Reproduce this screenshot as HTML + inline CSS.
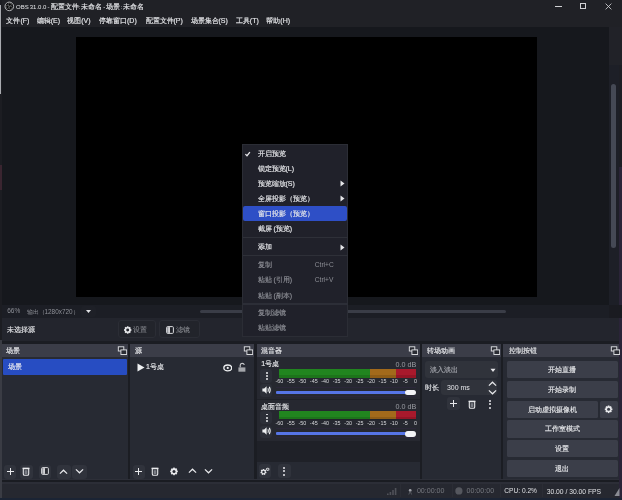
<!DOCTYPE html>
<html><head><meta charset="utf-8">
<style>
*{box-sizing:border-box;margin:0;padding:0}
html,body{width:622px;height:500px;overflow:hidden;background:#1b1d23}
body{position:relative;font-family:"Liberation Sans",sans-serif;font-size:7px;color:#e6e7ea}
.a{position:absolute;display:block}
.t{position:absolute;white-space:nowrap;font-weight:normal}
.t i{font-style:normal;font-size:7px;-webkit-text-stroke:0.15px currentColor}
</style></head><body>
<div id="root" style="position:absolute;left:0;top:0;width:622px;height:500px;will-change:transform">
<div class="a" style="left:0px;top:0px;width:622px;height:500px;background:#1b1d23;"></div>
<div class="a" style="left:0px;top:0px;width:2px;height:500px;background:#1c1d22;"></div>
<div class="a" style="left:0px;top:5px;width:1.3px;height:89px;background:#a9abb0;"></div>
<div class="a" style="left:0px;top:165px;width:1.5px;height:25px;background:#3a2530;"></div>
<div class="a" style="left:0px;top:340px;width:2px;height:160px;background:#3a3c44;"></div>
<div class="a" style="left:2px;top:0px;width:620px;height:27px;background:#202126;"></div>
<div class="a" style="left:619px;top:65px;width:3px;height:102px;background:#1d1e24;"></div>
<div class="a" style="left:619px;top:167px;width:3px;height:333px;background:#2a2438;"></div>
<svg class="a" style="left:4px;top:1px;" width="11" height="11" viewBox="0 0 11 11"><circle cx="5.3" cy="5.4" r="4.3" fill="#0a0a0c" stroke="#cfd0d3" stroke-width="0.85"/><circle cx="5.79" cy="3.56" r="1.55" fill="#050506" stroke="#9fa0a4" stroke-width="0.45"/><circle cx="6.64" cy="6.74" r="1.55" fill="#050506" stroke="#9fa0a4" stroke-width="0.45"/><circle cx="3.46" cy="5.89" r="1.55" fill="#050506" stroke="#9fa0a4" stroke-width="0.45"/></svg>
<div class="t" style="left:16px;top:-1.63px;font-size:6.0px;line-height:17.14px;color:#e4e5e8;word-spacing:-0.6px;">OBS 31.0.0 - <i>配置文件</i>: <i>未命名</i> - <i>场景</i>: <i>未命名</i></div>
<div class="a" style="left:554.5px;top:6px;width:7px;height:1px;background:#d0d1d4;"></div>
<div class="a" style="left:580px;top:3px;width:6px;height:6px;background:transparent;border:1px solid #d0d1d4"></div>
<svg class="a" style="left:605px;top:3px;" width="7" height="7" viewBox="0 0 7 7"><path d="M0.6 0.6L6.4 6.4M6.4 0.6L0.6 6.4" stroke="#d0d1d4" stroke-width="0.85"/></svg>
<div class="t" style="left:6.4px;top:11.40px;font-size:7px;line-height:20.00px;color:#e6e7ea;-webkit-text-stroke:0.15px currentColor;">文件(F)</div>
<div class="t" style="left:36.7px;top:11.40px;font-size:7px;line-height:20.00px;color:#e6e7ea;-webkit-text-stroke:0.15px currentColor;">编辑(E)</div>
<div class="t" style="left:67.2px;top:11.40px;font-size:7px;line-height:20.00px;color:#e6e7ea;-webkit-text-stroke:0.15px currentColor;">视图(V)</div>
<div class="t" style="left:99px;top:11.40px;font-size:7px;line-height:20.00px;color:#e6e7ea;-webkit-text-stroke:0.15px currentColor;">停靠窗口(D)</div>
<div class="t" style="left:145.5px;top:11.40px;font-size:7px;line-height:20.00px;color:#e6e7ea;-webkit-text-stroke:0.15px currentColor;">配置文件(P)</div>
<div class="t" style="left:190.5px;top:11.40px;font-size:7px;line-height:20.00px;color:#e6e7ea;-webkit-text-stroke:0.15px currentColor;">场景集合(S)</div>
<div class="t" style="left:235.8px;top:11.40px;font-size:7px;line-height:20.00px;color:#e6e7ea;-webkit-text-stroke:0.15px currentColor;">工具(T)</div>
<div class="t" style="left:266.3px;top:11.40px;font-size:7px;line-height:20.00px;color:#e6e7ea;-webkit-text-stroke:0.15px currentColor;">帮助(H)</div>
<div class="a" style="left:2px;top:27px;width:607px;height:278px;background:#16181d;"></div>
<div class="a" style="left:76px;top:37px;width:461px;height:260px;background:#000000;"></div>
<div class="a" style="left:609px;top:27px;width:13px;height:38px;background:#212228;"></div>
<div class="a" style="left:609px;top:65px;width:10px;height:240px;background:#1d1f27;"></div>
<div class="a" style="left:610.8px;top:83.5px;width:5.6px;height:164.5px;background:#454955;border-radius:2.5px"></div>
<div class="a" style="left:2px;top:305px;width:617px;height:12.5px;background:#1c1e25;"></div>
<div class="a" style="left:609px;top:305px;width:13px;height:12.5px;background:#1a1b21;"></div>
<div class="t" style="left:7.2px;top:302.39px;font-size:6.5px;line-height:18.57px;color:#8e9097;">66%</div>
<div class="t" style="left:26.5px;top:302.52px;font-size:6.4px;line-height:18.29px;color:#8e9097;">输出（1280x720）</div>
<div class="a" style="left:80.5px;top:305.5px;width:15px;height:11.5px;background:#1e2027;border-radius:3px"></div>
<svg class="a" style="left:85px;top:309px;" width="7" height="5" viewBox="0 0 7 5"><path d="M1 1L6 1L3.5 4Z" fill="#e0e1e4"/></svg>
<div class="a" style="left:199.8px;top:309.6px;width:305.8px;height:3.8px;background:#3a3d47;border-radius:2px"></div>
<div class="a" style="left:2px;top:317.5px;width:617px;height:23.3px;background:#23252d;"></div>
<div class="t" style="left:7px;top:320.00px;font-size:7px;line-height:20.00px;color:#e0e1e4;-webkit-text-stroke:0.15px currentColor;">未选择源</div>
<div class="a" style="left:118.4px;top:320.1px;width:37.4px;height:18.3px;background:#22242b;border:1px solid #2b2d35;border-radius:3px"></div>
<div class="a" style="left:158.9px;top:320.1px;width:41.1px;height:18.3px;background:#22242b;border:1px solid #2b2d35;border-radius:3px"></div>
<div class="t" style="left:133.4px;top:320.40px;font-size:7px;line-height:20.00px;color:#9a9ca2;">设置</div>
<svg class="a" style="left:0;top:0" width="622" height="500"><circle cx="127.7" cy="330" r="2.96" fill="#e8e9ec"/><rect x="126.89" y="326.30" width="1.63" height="1.85" fill="#e8e9ec" transform="rotate(0.0 127.7 330)"/><rect x="126.89" y="326.30" width="1.63" height="1.85" fill="#e8e9ec" transform="rotate(45.0 127.7 330)"/><rect x="126.89" y="326.30" width="1.63" height="1.85" fill="#e8e9ec" transform="rotate(90.0 127.7 330)"/><rect x="126.89" y="326.30" width="1.63" height="1.85" fill="#e8e9ec" transform="rotate(135.0 127.7 330)"/><rect x="126.89" y="326.30" width="1.63" height="1.85" fill="#e8e9ec" transform="rotate(180.0 127.7 330)"/><rect x="126.89" y="326.30" width="1.63" height="1.85" fill="#e8e9ec" transform="rotate(225.0 127.7 330)"/><rect x="126.89" y="326.30" width="1.63" height="1.85" fill="#e8e9ec" transform="rotate(270.0 127.7 330)"/><rect x="126.89" y="326.30" width="1.63" height="1.85" fill="#e8e9ec" transform="rotate(315.0 127.7 330)"/><circle cx="127.7" cy="330" r="1.48" fill="#22242b"/></svg>
<div class="t" style="left:175.8px;top:320.40px;font-size:7px;line-height:20.00px;color:#9a9ca2;">滤镜</div>
<svg class="a" style="left:165.8px;top:326px;" width="8" height="8" viewBox="0 0 8 8"><defs><linearGradient id="fg2" x1="0" x2="1"><stop offset="0" stop-color="#9a9ca2"/><stop offset="1" stop-color="#f0f0f2"/></linearGradient></defs><rect x="0.6" y="0.6" width="6.8" height="6.8" rx="1" fill="#22242b" stroke="#d8d9dc" stroke-width="1"/><rect x="1.1" y="1.1" width="2.8" height="5.8" fill="url(#fg2)"/></svg>
<div class="a" style="left:2px;top:343.5px;width:126px;height:13.8px;background:#3b3d48;"></div>
<div class="a" style="left:2px;top:357.3px;width:126px;height:122.7px;background:#272a33;"></div>
<div class="t" style="left:6.3px;top:341.10px;font-size:7px;line-height:20.00px;color:#e6e7ea;-webkit-text-stroke:0.15px currentColor;">场景</div>
<div class="a" style="left:130px;top:343.5px;width:124px;height:13.8px;background:#3b3d48;"></div>
<div class="a" style="left:130px;top:357.3px;width:124px;height:122.7px;background:#272a33;"></div>
<div class="t" style="left:134.5px;top:341.10px;font-size:7px;line-height:20.00px;color:#e6e7ea;-webkit-text-stroke:0.15px currentColor;">源</div>
<div class="a" style="left:257px;top:343.5px;width:163px;height:13.8px;background:#3b3d48;"></div>
<div class="a" style="left:257px;top:357.3px;width:163px;height:122.7px;background:#272a33;"></div>
<div class="t" style="left:260.8px;top:341.10px;font-size:7px;line-height:20.00px;color:#e6e7ea;-webkit-text-stroke:0.15px currentColor;">混音器</div>
<div class="a" style="left:422px;top:343.5px;width:79px;height:13.8px;background:#3b3d48;"></div>
<div class="a" style="left:422px;top:357.3px;width:79px;height:122.7px;background:#272a33;"></div>
<div class="t" style="left:427.2px;top:341.10px;font-size:7px;line-height:20.00px;color:#e6e7ea;-webkit-text-stroke:0.15px currentColor;">转场动画</div>
<div class="a" style="left:503px;top:343.5px;width:116px;height:13.8px;background:#3b3d48;"></div>
<div class="a" style="left:503px;top:357.3px;width:116px;height:122.7px;background:#272a33;"></div>
<div class="t" style="left:508.5px;top:341.10px;font-size:7px;line-height:20.00px;color:#e6e7ea;-webkit-text-stroke:0.15px currentColor;">控制按钮</div>
<div class="a" style="left:2.8px;top:358.9px;width:124px;height:16.3px;background:#274dc2;border-radius:1px"></div>
<div class="t" style="left:7.5px;top:356.90px;font-size:7px;line-height:20.00px;color:#e6e8f0;-webkit-text-stroke:0.15px currentColor;">场景</div>
<svg class="a" style="left:116.5px;top:346.4px;" width="10" height="9" viewBox="0 0 10 9"><rect x="1.3" y="0.8" width="5.5" height="4.2" fill="#2a2c33" stroke="#e6e7ea" stroke-width="0.9"/><rect x="3.9" y="3.9" width="5.8" height="4.6" fill="#2a2c33" stroke="#e6e7ea" stroke-width="0.9"/></svg>
<svg class="a" style="left:242.5px;top:346.4px;" width="10" height="9" viewBox="0 0 10 9"><rect x="1.3" y="0.8" width="5.5" height="4.2" fill="#2a2c33" stroke="#e6e7ea" stroke-width="0.9"/><rect x="3.9" y="3.9" width="5.8" height="4.6" fill="#2a2c33" stroke="#e6e7ea" stroke-width="0.9"/></svg>
<svg class="a" style="left:408px;top:346.4px;" width="10" height="9" viewBox="0 0 10 9"><rect x="1.3" y="0.8" width="5.5" height="4.2" fill="#2a2c33" stroke="#e6e7ea" stroke-width="0.9"/><rect x="3.9" y="3.9" width="5.8" height="4.6" fill="#2a2c33" stroke="#e6e7ea" stroke-width="0.9"/></svg>
<svg class="a" style="left:489.5px;top:346.4px;" width="10" height="9" viewBox="0 0 10 9"><rect x="1.3" y="0.8" width="5.5" height="4.2" fill="#2a2c33" stroke="#e6e7ea" stroke-width="0.9"/><rect x="3.9" y="3.9" width="5.8" height="4.6" fill="#2a2c33" stroke="#e6e7ea" stroke-width="0.9"/></svg>
<svg class="a" style="left:609.5px;top:346.4px;" width="10" height="9" viewBox="0 0 10 9"><rect x="1.3" y="0.8" width="5.5" height="4.2" fill="#2a2c33" stroke="#e6e7ea" stroke-width="0.9"/><rect x="3.9" y="3.9" width="5.8" height="4.6" fill="#2a2c33" stroke="#e6e7ea" stroke-width="0.9"/></svg>
<div class="a" style="left:3.6px;top:464.5px;width:12.3px;height:14px;background:#30333c;border-radius:3px"></div>
<div class="a" style="left:20.3px;top:464.5px;width:12.3px;height:14px;background:#30333c;border-radius:3px"></div>
<div class="a" style="left:39px;top:464.5px;width:12.399999999999999px;height:14px;background:#30333c;border-radius:3px"></div>
<div class="a" style="left:57.2px;top:464.5px;width:13.700000000000003px;height:14px;background:#30333c;border-radius:3px"></div>
<div class="a" style="left:72.4px;top:464.5px;width:14.399999999999991px;height:14px;background:#30333c;border-radius:3px"></div>
<div class="a" style="left:7.0px;top:470.9px;width:7px;height:1.1px;background:#e8e9ec;"></div>
<div class="a" style="left:9.95px;top:467.9px;width:1.1px;height:7px;background:#e8e9ec;"></div>
<svg class="a" style="left:22.1px;top:466.9px;" width="8" height="9" viewBox="0 0 8 9"><path d="M1.3 1.6H6.7V7Q6.7 8.3 5.4 8.3H2.6Q1.3 8.3 1.3 7Z" fill="none" stroke="#e8e9ec" stroke-width="1.1"/><path d="M0.6 1.3H7.4" stroke="#e8e9ec" stroke-width="1.3"/><rect x="2.6" y="3.2" width="2.8" height="3.8" fill="#7a7d85"/></svg>
<svg class="a" style="left:40.7px;top:466.6px;" width="8" height="8" viewBox="0 0 8 8"><defs><linearGradient id="fg" x1="0" x2="1"><stop offset="0" stop-color="#9a9ca2"/><stop offset="1" stop-color="#f0f0f2"/></linearGradient></defs><rect x="0.6" y="0.6" width="6.8" height="6.8" rx="1" fill="#2a2c33" stroke="#d8d9dc" stroke-width="1"/><rect x="1.1" y="1.1" width="2.8" height="5.8" fill="url(#fg)"/></svg>
<svg class="a" style="left:59.1px;top:468.6px;" width="9" height="6" viewBox="0 0 9 6"><path d="M0.9 4.6L4.5 1.2L8.1 4.6" fill="none" stroke="#e8e9ec" stroke-width="1.2"/></svg>
<svg class="a" style="left:75.2px;top:468.4px;" width="9" height="6" viewBox="0 0 9 6"><path d="M0.9 1.4L4.5 4.8L8.1 1.4" fill="none" stroke="#e8e9ec" stroke-width="1.2"/></svg>
<svg class="a" style="left:136.5px;top:362.5px;" width="8" height="9" viewBox="0 0 8 9"><path d="M0.5 0.5L7.5 4.5L0.5 8.5Z" fill="#eef0f2"/></svg>
<div class="t" style="left:146px;top:357.40px;font-size:7px;line-height:20.00px;color:#e6e7ea;-webkit-text-stroke:0.15px currentColor;">1号桌</div>
<svg class="a" style="left:222.5px;top:363.6px;" width="9.5" height="8" viewBox="0 0 9.5 8"><ellipse cx="4.75" cy="3.9" rx="3.9" ry="2.9" fill="none" stroke="#eef0f2" stroke-width="1.35"/><circle cx="4.75" cy="3.9" r="1.1" fill="#eef0f2"/></svg>
<svg class="a" style="left:237.5px;top:362.3px;" width="8" height="10" viewBox="0 0 8 10"><path d="M2.2 5.5V3A2.1 2.1 0 0 1 6.3 3" fill="none" stroke="#c8c9cc" stroke-width="1.1"/><rect x="0.4" y="5.4" width="7" height="4.3" fill="#a3a5aa"/></svg>
<div class="a" style="left:132.6px;top:464.5px;width:12.5px;height:14px;background:#30333c;border-radius:3px"></div>
<div class="a" style="left:135.3px;top:470.9px;width:7px;height:1.1px;background:#e8e9ec;"></div>
<div class="a" style="left:138.25px;top:467.9px;width:1.1px;height:7px;background:#e8e9ec;"></div>
<svg class="a" style="left:151px;top:466.9px;" width="8" height="9" viewBox="0 0 8 9"><path d="M1.3 1.6H6.7V7Q6.7 8.3 5.4 8.3H2.6Q1.3 8.3 1.3 7Z" fill="none" stroke="#e8e9ec" stroke-width="1.1"/><path d="M0.6 1.3H7.4" stroke="#e8e9ec" stroke-width="1.3"/><rect x="2.6" y="3.2" width="2.8" height="3.8" fill="#7a7d85"/></svg>
<svg class="a" style="left:0;top:0" width="622" height="500"><circle cx="174" cy="471.4" r="3.04" fill="#e8e9ec"/><rect x="173.16" y="467.60" width="1.67" height="1.90" fill="#e8e9ec" transform="rotate(0.0 174 471.4)"/><rect x="173.16" y="467.60" width="1.67" height="1.90" fill="#e8e9ec" transform="rotate(45.0 174 471.4)"/><rect x="173.16" y="467.60" width="1.67" height="1.90" fill="#e8e9ec" transform="rotate(90.0 174 471.4)"/><rect x="173.16" y="467.60" width="1.67" height="1.90" fill="#e8e9ec" transform="rotate(135.0 174 471.4)"/><rect x="173.16" y="467.60" width="1.67" height="1.90" fill="#e8e9ec" transform="rotate(180.0 174 471.4)"/><rect x="173.16" y="467.60" width="1.67" height="1.90" fill="#e8e9ec" transform="rotate(225.0 174 471.4)"/><rect x="173.16" y="467.60" width="1.67" height="1.90" fill="#e8e9ec" transform="rotate(270.0 174 471.4)"/><rect x="173.16" y="467.60" width="1.67" height="1.90" fill="#e8e9ec" transform="rotate(315.0 174 471.4)"/><circle cx="174" cy="471.4" r="1.52" fill="#272a33"/></svg>
<svg class="a" style="left:188.3px;top:468.4px;" width="9" height="6" viewBox="0 0 9 6"><path d="M0.9 4.6L4.5 1.2L8.1 4.6" fill="none" stroke="#e8e9ec" stroke-width="1.2"/></svg>
<svg class="a" style="left:204.0px;top:468.4px;" width="9" height="6" viewBox="0 0 9 6"><path d="M0.9 1.4L4.5 4.8L8.1 1.4" fill="none" stroke="#e8e9ec" stroke-width="1.2"/></svg>
<div class="a" style="left:257px;top:357.4px;width:163px;height:83.6px;background:#262830;"></div>
<div class="a" style="left:257px;top:441px;width:163px;height:21px;background:#1f2128;"></div>
<div class="a" style="left:257px;top:398.6px;width:163px;height:1px;background:#1f2128;"></div>
<div class="t" style="left:261.2px;top:354.20px;font-size:7px;line-height:20.00px;color:#e6e7ea;-webkit-text-stroke:0.15px currentColor;">1号桌</div>
<div class="t" style="left:376.30px;width:40px;text-align:right;top:354.53px;font-size:7.2px;line-height:20.57px;color:#9a9ca3;">0.0 dB</div>
<div class="a" style="left:259.6px;top:368.9px;width:12.2px;height:13.8px;background:#2c2f38;border-radius:3px"></div>
<div class="a" style="left:265.95px;top:371.8px;width:1.9px;height:1.9px;background:#e8e9ec;border-radius:50%"></div>
<div class="a" style="left:265.95px;top:375.05px;width:1.9px;height:1.9px;background:#e8e9ec;border-radius:50%"></div>
<div class="a" style="left:265.95px;top:378.3px;width:1.9px;height:1.9px;background:#e8e9ec;border-radius:50%"></div>
<div class="a" style="left:259.6px;top:384.4px;width:12.2px;height:12.6px;background:#2c2f38;border-radius:3px"></div>
<svg class="a" style="left:262.3px;top:386.2px;" width="9.5" height="8" viewBox="0 0 9.5 8"><path d="M0.4 2.4H2.2L4.6 0.3V7.7L2.2 5.6H0.4Z" fill="#eef0f2"/><path d="M5.9 2.2Q6.9 4 5.9 5.8M7.3 0.9Q9.1 4 7.3 7.1" fill="none" stroke="#eef0f2" stroke-width="1.1"/></svg>
<div class="a" style="left:278.8px;top:369.4px;width:91.2px;height:8.3px;background:#21851f;"></div>
<div class="a" style="left:370px;top:369.4px;width:26.2px;height:8.3px;background:#a36a1b;"></div>
<div class="a" style="left:396.2px;top:369.4px;width:19.8px;height:8.3px;background:#a8192c;"></div>
<div class="a" style="left:278.8px;top:374.7px;width:137.2px;height:3px;background:rgba(0,0,0,0.12);"></div>
<div class="t" style="left:272.40px;width:14px;text-align:center;top:374.29px;font-size:5.4px;line-height:15.43px;color:#d8d9dc;">-60</div>
<div class="t" style="left:283.86px;width:14px;text-align:center;top:374.29px;font-size:5.4px;line-height:15.43px;color:#d8d9dc;">-55</div>
<div class="t" style="left:295.32px;width:14px;text-align:center;top:374.29px;font-size:5.4px;line-height:15.43px;color:#d8d9dc;">-50</div>
<div class="t" style="left:306.77px;width:14px;text-align:center;top:374.29px;font-size:5.4px;line-height:15.43px;color:#d8d9dc;">-45</div>
<div class="t" style="left:318.23px;width:14px;text-align:center;top:374.29px;font-size:5.4px;line-height:15.43px;color:#d8d9dc;">-40</div>
<div class="t" style="left:329.69px;width:14px;text-align:center;top:374.29px;font-size:5.4px;line-height:15.43px;color:#d8d9dc;">-35</div>
<div class="t" style="left:341.15px;width:14px;text-align:center;top:374.29px;font-size:5.4px;line-height:15.43px;color:#d8d9dc;">-30</div>
<div class="t" style="left:352.61px;width:14px;text-align:center;top:374.29px;font-size:5.4px;line-height:15.43px;color:#d8d9dc;">-25</div>
<div class="t" style="left:364.07px;width:14px;text-align:center;top:374.29px;font-size:5.4px;line-height:15.43px;color:#d8d9dc;">-20</div>
<div class="t" style="left:375.52px;width:14px;text-align:center;top:374.29px;font-size:5.4px;line-height:15.43px;color:#d8d9dc;">-15</div>
<div class="t" style="left:386.98px;width:14px;text-align:center;top:374.29px;font-size:5.4px;line-height:15.43px;color:#d8d9dc;">-10</div>
<div class="t" style="left:398.44px;width:14px;text-align:center;top:374.29px;font-size:5.4px;line-height:15.43px;color:#d8d9dc;">-5</div>
<div class="t" style="left:408.40px;width:14px;text-align:center;top:374.29px;font-size:5.4px;line-height:15.43px;color:#d8d9dc;">0</div>
<div class="a" style="left:276.2px;top:387.0px;width:140px;height:1px;background:#2b2739;"></div>
<div class="a" style="left:276.2px;top:391.2px;width:130px;height:2.4px;background:#5675e6;border-radius:1px"></div>
<div class="a" style="left:276.2px;top:395.79999999999995px;width:140px;height:1px;background:#2b2739;"></div>
<div class="a" style="left:404.8px;top:389.59999999999997px;width:11px;height:5.8px;background:#f2f3f5;border-radius:2.9px"></div>
<div class="t" style="left:261.2px;top:396.60px;font-size:7px;line-height:20.00px;color:#e6e7ea;-webkit-text-stroke:0.15px currentColor;">桌面音频</div>
<div class="t" style="left:376.30px;width:40px;text-align:right;top:396.93px;font-size:7.2px;line-height:20.57px;color:#9a9ca3;">0.0 dB</div>
<div class="a" style="left:259.6px;top:410.7px;width:12.2px;height:13.8px;background:#2c2f38;border-radius:3px"></div>
<div class="a" style="left:265.95px;top:413.6px;width:1.9px;height:1.9px;background:#e8e9ec;border-radius:50%"></div>
<div class="a" style="left:265.95px;top:416.85px;width:1.9px;height:1.9px;background:#e8e9ec;border-radius:50%"></div>
<div class="a" style="left:265.95px;top:420.1px;width:1.9px;height:1.9px;background:#e8e9ec;border-radius:50%"></div>
<div class="a" style="left:259.6px;top:425.6px;width:12.2px;height:12.6px;background:#2c2f38;border-radius:3px"></div>
<svg class="a" style="left:262.3px;top:427.40000000000003px;" width="9.5" height="8" viewBox="0 0 9.5 8"><path d="M0.4 2.4H2.2L4.6 0.3V7.7L2.2 5.6H0.4Z" fill="#eef0f2"/><path d="M5.9 2.2Q6.9 4 5.9 5.8M7.3 0.9Q9.1 4 7.3 7.1" fill="none" stroke="#eef0f2" stroke-width="1.1"/></svg>
<div class="a" style="left:278.8px;top:411.2px;width:91.2px;height:8.3px;background:#21851f;"></div>
<div class="a" style="left:370px;top:411.2px;width:26.2px;height:8.3px;background:#a36a1b;"></div>
<div class="a" style="left:396.2px;top:411.2px;width:19.8px;height:8.3px;background:#a8192c;"></div>
<div class="a" style="left:278.8px;top:416.5px;width:137.2px;height:3px;background:rgba(0,0,0,0.12);"></div>
<div class="t" style="left:272.40px;width:14px;text-align:center;top:415.79px;font-size:5.4px;line-height:15.43px;color:#d8d9dc;">-60</div>
<div class="t" style="left:283.86px;width:14px;text-align:center;top:415.79px;font-size:5.4px;line-height:15.43px;color:#d8d9dc;">-55</div>
<div class="t" style="left:295.32px;width:14px;text-align:center;top:415.79px;font-size:5.4px;line-height:15.43px;color:#d8d9dc;">-50</div>
<div class="t" style="left:306.77px;width:14px;text-align:center;top:415.79px;font-size:5.4px;line-height:15.43px;color:#d8d9dc;">-45</div>
<div class="t" style="left:318.23px;width:14px;text-align:center;top:415.79px;font-size:5.4px;line-height:15.43px;color:#d8d9dc;">-40</div>
<div class="t" style="left:329.69px;width:14px;text-align:center;top:415.79px;font-size:5.4px;line-height:15.43px;color:#d8d9dc;">-35</div>
<div class="t" style="left:341.15px;width:14px;text-align:center;top:415.79px;font-size:5.4px;line-height:15.43px;color:#d8d9dc;">-30</div>
<div class="t" style="left:352.61px;width:14px;text-align:center;top:415.79px;font-size:5.4px;line-height:15.43px;color:#d8d9dc;">-25</div>
<div class="t" style="left:364.07px;width:14px;text-align:center;top:415.79px;font-size:5.4px;line-height:15.43px;color:#d8d9dc;">-20</div>
<div class="t" style="left:375.52px;width:14px;text-align:center;top:415.79px;font-size:5.4px;line-height:15.43px;color:#d8d9dc;">-15</div>
<div class="t" style="left:386.98px;width:14px;text-align:center;top:415.79px;font-size:5.4px;line-height:15.43px;color:#d8d9dc;">-10</div>
<div class="t" style="left:398.44px;width:14px;text-align:center;top:415.79px;font-size:5.4px;line-height:15.43px;color:#d8d9dc;">-5</div>
<div class="t" style="left:408.40px;width:14px;text-align:center;top:415.79px;font-size:5.4px;line-height:15.43px;color:#d8d9dc;">0</div>
<div class="a" style="left:276.2px;top:428.20000000000005px;width:140px;height:1px;background:#2b2739;"></div>
<div class="a" style="left:276.2px;top:432.40000000000003px;width:130px;height:2.4px;background:#5675e6;border-radius:1px"></div>
<div class="a" style="left:276.2px;top:437.0px;width:140px;height:1px;background:#2b2739;"></div>
<div class="a" style="left:404.8px;top:430.8px;width:11px;height:5.8px;background:#f2f3f5;border-radius:2.9px"></div>
<div class="a" style="left:258.6px;top:464.4px;width:12.6px;height:13.5px;background:#30333c;border-radius:3px"></div>
<div class="a" style="left:277.5px;top:464.4px;width:13.5px;height:13.5px;background:#30333c;border-radius:3px"></div>
<svg class="a" style="left:0;top:0" width="622" height="500"><circle cx="263.5" cy="472" r="2.40" fill="#e8e9ec"/><rect x="262.84" y="469.00" width="1.32" height="1.50" fill="#e8e9ec" transform="rotate(0.0 263.5 472)"/><rect x="262.84" y="469.00" width="1.32" height="1.50" fill="#e8e9ec" transform="rotate(51.4 263.5 472)"/><rect x="262.84" y="469.00" width="1.32" height="1.50" fill="#e8e9ec" transform="rotate(102.9 263.5 472)"/><rect x="262.84" y="469.00" width="1.32" height="1.50" fill="#e8e9ec" transform="rotate(154.3 263.5 472)"/><rect x="262.84" y="469.00" width="1.32" height="1.50" fill="#e8e9ec" transform="rotate(205.7 263.5 472)"/><rect x="262.84" y="469.00" width="1.32" height="1.50" fill="#e8e9ec" transform="rotate(257.1 263.5 472)"/><rect x="262.84" y="469.00" width="1.32" height="1.50" fill="#e8e9ec" transform="rotate(308.6 263.5 472)"/><circle cx="263.5" cy="472" r="1.20" fill="#272a33"/></svg>
<svg class="a" style="left:0;top:0" width="622" height="500"><circle cx="267.8" cy="469.3" r="1.36" fill="#e8e9ec"/><rect x="267.43" y="467.60" width="0.75" height="0.85" fill="#e8e9ec" transform="rotate(0.0 267.8 469.3)"/><rect x="267.43" y="467.60" width="0.75" height="0.85" fill="#e8e9ec" transform="rotate(60.0 267.8 469.3)"/><rect x="267.43" y="467.60" width="0.75" height="0.85" fill="#e8e9ec" transform="rotate(120.0 267.8 469.3)"/><rect x="267.43" y="467.60" width="0.75" height="0.85" fill="#e8e9ec" transform="rotate(180.0 267.8 469.3)"/><rect x="267.43" y="467.60" width="0.75" height="0.85" fill="#e8e9ec" transform="rotate(240.0 267.8 469.3)"/><rect x="267.43" y="467.60" width="0.75" height="0.85" fill="#e8e9ec" transform="rotate(300.0 267.8 469.3)"/><circle cx="267.8" cy="469.3" r="0.68" fill="#272a33"/></svg>
<div class="a" style="left:283.09999999999997px;top:466.59999999999997px;width:2.2px;height:2.2px;background:#e8e9ec;border-radius:50%"></div>
<div class="a" style="left:283.09999999999997px;top:470.09999999999997px;width:2.2px;height:2.2px;background:#e8e9ec;border-radius:50%"></div>
<div class="a" style="left:283.09999999999997px;top:473.59999999999997px;width:2.2px;height:2.2px;background:#e8e9ec;border-radius:50%"></div>
<div class="a" style="left:424.8px;top:360.8px;width:73.6px;height:17px;background:#30333b;border-radius:3px"></div>
<div class="t" style="left:430.4px;top:360.00px;font-size:7px;line-height:20.00px;color:#a3a5ac;-webkit-text-stroke:0.15px currentColor;">淡入淡出</div>
<svg class="a" style="left:489.6px;top:367.5px;" width="6" height="5" viewBox="0 0 6 5"><path d="M0.5 0.8H5.5L3 4Z" fill="#e6e7ea"/></svg>
<div class="t" style="left:424.8px;top:378.10px;font-size:7px;line-height:20.00px;color:#e6e7ea;-webkit-text-stroke:0.15px currentColor;">时长</div>
<div class="a" style="left:440.6px;top:379.6px;width:46px;height:15.9px;background:#30333b;border-radius:3px 0 0 3px"></div>
<div class="a" style="left:486.6px;top:379.6px;width:10.6px;height:15.9px;background:#32353d;border-radius:0 3px 3px 0"></div>
<div class="t" style="left:446.9px;top:378.10px;font-size:7px;line-height:20.00px;color:#e6e7ea;">300 ms</div>
<svg class="a" style="left:487.8px;top:381px;" width="9" height="6" viewBox="0 0 9 6"><path d="M0.9 4.6L4.5 1.2L8.1 4.6" fill="none" stroke="#e8e9ec" stroke-width="1.2"/></svg>
<svg class="a" style="left:487.8px;top:388.5px;" width="9" height="6" viewBox="0 0 9 6"><path d="M0.9 1.4L4.5 4.8L8.1 1.4" fill="none" stroke="#e8e9ec" stroke-width="1.2"/></svg>
<div class="a" style="left:447.2px;top:396.8px;width:12.8px;height:13.6px;background:#30333c;border-radius:3px"></div>
<div class="a" style="left:450.1px;top:403.1px;width:7px;height:1.1px;background:#e8e9ec;"></div>
<div class="a" style="left:453.05px;top:400.1px;width:1.1px;height:7px;background:#e8e9ec;"></div>
<svg class="a" style="left:468px;top:399.5px;" width="8" height="9" viewBox="0 0 8 9"><path d="M1.3 1.6H6.7V7Q6.7 8.3 5.4 8.3H2.6Q1.3 8.3 1.3 7Z" fill="none" stroke="#e8e9ec" stroke-width="1.1"/><path d="M0.6 1.3H7.4" stroke="#e8e9ec" stroke-width="1.3"/><rect x="2.6" y="3.2" width="2.8" height="3.8" fill="#7a7d85"/></svg>
<div class="a" style="left:489.29999999999995px;top:399.7px;width:2.2px;height:2.2px;background:#e8e9ec;border-radius:50%"></div>
<div class="a" style="left:489.29999999999995px;top:403.2px;width:2.2px;height:2.2px;background:#e8e9ec;border-radius:50%"></div>
<div class="a" style="left:489.29999999999995px;top:406.7px;width:2.2px;height:2.2px;background:#e8e9ec;border-radius:50%"></div>
<div class="a" style="left:506.9px;top:360.9px;width:110.7px;height:17.6px;background:#3b3e49;border-radius:1.5px"></div>
<div class="t" style="left:512.25px;width:100px;text-align:center;top:360.10px;font-size:7px;line-height:20.00px;color:#e6e7ea;-webkit-text-stroke:0.15px currentColor;">开始直播</div>
<div class="a" style="left:506.9px;top:380.59999999999997px;width:110.7px;height:17.6px;background:#3b3e49;border-radius:1.5px"></div>
<div class="t" style="left:512.25px;width:100px;text-align:center;top:379.80px;font-size:7px;line-height:20.00px;color:#e6e7ea;-webkit-text-stroke:0.15px currentColor;">开始录制</div>
<div class="a" style="left:506.9px;top:420.2px;width:110.7px;height:17.6px;background:#3b3e49;border-radius:1.5px"></div>
<div class="t" style="left:512.25px;width:100px;text-align:center;top:419.40px;font-size:7px;line-height:20.00px;color:#e6e7ea;-webkit-text-stroke:0.15px currentColor;">工作室模式</div>
<div class="a" style="left:506.9px;top:439.9px;width:110.7px;height:17.6px;background:#3b3e49;border-radius:1.5px"></div>
<div class="t" style="left:512.25px;width:100px;text-align:center;top:439.10px;font-size:7px;line-height:20.00px;color:#e6e7ea;-webkit-text-stroke:0.15px currentColor;">设置</div>
<div class="a" style="left:506.9px;top:459.59999999999997px;width:110.7px;height:17.6px;background:#3b3e49;border-radius:1.5px"></div>
<div class="t" style="left:512.25px;width:100px;text-align:center;top:458.80px;font-size:7px;line-height:20.00px;color:#e6e7ea;-webkit-text-stroke:0.15px currentColor;">退出</div>
<div class="a" style="left:506.9px;top:400.5px;width:90.7px;height:17.6px;background:#3b3e49;border-radius:1.5px"></div>
<div class="t" style="left:507.25px;width:90px;text-align:center;top:399.70px;font-size:7px;line-height:20.00px;color:#e6e7ea;-webkit-text-stroke:0.15px currentColor;">启动虚拟摄像机</div>
<div class="a" style="left:599.6px;top:400.5px;width:18px;height:17.6px;background:#3b3e49;border-radius:1.5px"></div>
<svg class="a" style="left:0;top:0" width="622" height="500"><circle cx="608.6" cy="409.3" r="3.04" fill="#e8e9ec"/><rect x="607.76" y="405.50" width="1.67" height="1.90" fill="#e8e9ec" transform="rotate(0.0 608.6 409.3)"/><rect x="607.76" y="405.50" width="1.67" height="1.90" fill="#e8e9ec" transform="rotate(45.0 608.6 409.3)"/><rect x="607.76" y="405.50" width="1.67" height="1.90" fill="#e8e9ec" transform="rotate(90.0 608.6 409.3)"/><rect x="607.76" y="405.50" width="1.67" height="1.90" fill="#e8e9ec" transform="rotate(135.0 608.6 409.3)"/><rect x="607.76" y="405.50" width="1.67" height="1.90" fill="#e8e9ec" transform="rotate(180.0 608.6 409.3)"/><rect x="607.76" y="405.50" width="1.67" height="1.90" fill="#e8e9ec" transform="rotate(225.0 608.6 409.3)"/><rect x="607.76" y="405.50" width="1.67" height="1.90" fill="#e8e9ec" transform="rotate(270.0 608.6 409.3)"/><rect x="607.76" y="405.50" width="1.67" height="1.90" fill="#e8e9ec" transform="rotate(315.0 608.6 409.3)"/><circle cx="608.6" cy="409.3" r="1.52" fill="#3b3e49"/></svg>
<div class="a" style="left:2px;top:479px;width:617px;height:1px;background:#2d2f38;"></div>
<div class="a" style="left:2px;top:480px;width:617px;height:2px;background:#1a1c22;"></div>
<div class="a" style="left:2px;top:482px;width:617px;height:2px;background:#2c2e37;"></div>
<div class="a" style="left:2px;top:484px;width:617px;height:13.5px;background:#262830;"></div>
<div class="a" style="left:0px;top:497.5px;width:622px;height:2.5px;background:#1b2434;"></div>
<div class="t" style="left:504.3px;top:481.95px;font-size:6.6px;line-height:18.86px;color:#e0e1e4;">CPU: 0.2%</div>
<div class="t" style="left:546.7px;top:481.74px;font-size:6.75px;line-height:19.29px;color:#e0e1e4;">30.00 / 30.00 FPS</div>
<div class="t" style="left:416.9px;top:481.26px;font-size:7.1px;line-height:20.29px;color:#76787f;">00:00:00</div>
<div class="t" style="left:466.5px;top:481.26px;font-size:7.1px;line-height:20.29px;color:#76787f;">00:00:00</div>
<div class="a" style="left:400.3px;top:484px;width:1px;height:13px;background:#2b2d35;"></div>
<div class="a" style="left:451.6px;top:484px;width:1px;height:13px;background:#2b2d35;"></div>
<div class="a" style="left:499.6px;top:484px;width:1px;height:13px;background:#2b2d35;"></div>
<div class="a" style="left:542px;top:484px;width:1px;height:13px;background:#2b2d35;"></div>
<svg class="a" style="left:386.5px;top:487.5px;" width="10" height="7.5" viewBox="0 0 10 7.5"><rect x="0" y="5.5" width="1.6" height="2" fill="#505259"/><rect x="2.6" y="4" width="1.6" height="3.5" fill="#505259"/><rect x="5.2" y="2" width="1.6" height="5.5" fill="#505259"/><rect x="7.8" y="0" width="1.6" height="7.5" fill="#505259"/></svg>
<svg class="a" style="left:406.5px;top:486.5px;" width="7" height="8" viewBox="0 0 7 8"><circle cx="3.2" cy="3.4" r="1.4" fill="#a0a2a8"/><path d="M3.2 4.2L1.8 7.5M3.2 4.2L4.6 7.5" stroke="#60626a" stroke-width="0.8"/></svg>
<svg class="a" style="left:455px;top:486.6px;" width="8" height="8" viewBox="0 0 8 8"><circle cx="3.9" cy="3.9" r="3.6" fill="#55575e"/></svg>
<svg class="a" style="left:614px;top:487px;" width="6" height="10" viewBox="0 0 6 10"><path d="M5.5 1L5.5 9L0.5 9Z" fill="#8a8c93"/></svg>
<div class="a" style="left:242px;top:144px;width:106px;height:193px;background:#20212a;border:1px solid #2b2d35"></div>
<div class="a" style="left:243.4px;top:206.2px;width:103.4px;height:14.8px;background:#2e4fc6;border-radius:2px"></div>
<svg class="a" style="left:244px;top:151px;" width="7" height="6" viewBox="0 0 7 6"><path d="M1.4 3.1L3 4.7L5.9 1.2" fill="none" stroke="#e6e7ea" stroke-width="1.3"/></svg>
<div class="t" style="left:257.5px;top:143.50px;font-size:7px;line-height:20.00px;color:#e6e7ea;-webkit-text-stroke:0.15px currentColor;">开启预览</div>
<div class="t" style="left:257.5px;top:158.90px;font-size:7px;line-height:20.00px;color:#e6e7ea;-webkit-text-stroke:0.15px currentColor;">锁定预览(L)</div>
<div class="t" style="left:257.5px;top:173.80px;font-size:7px;line-height:20.00px;color:#e6e7ea;-webkit-text-stroke:0.15px currentColor;">预览缩放(S)</div>
<div class="t" style="left:257.5px;top:188.80px;font-size:7px;line-height:20.00px;color:#e6e7ea;-webkit-text-stroke:0.15px currentColor;">全屏投影（预览）</div>
<div class="t" style="left:257.5px;top:204.00px;font-size:7px;line-height:20.00px;color:#e6e7ea;-webkit-text-stroke:0.15px currentColor;">窗口投影（预览）</div>
<div class="t" style="left:257.5px;top:219.40px;font-size:7px;line-height:20.00px;color:#e6e7ea;-webkit-text-stroke:0.15px currentColor;">截屏 (预览)</div>
<div class="t" style="left:257.5px;top:237.40px;font-size:7px;line-height:20.00px;color:#e6e7ea;-webkit-text-stroke:0.15px currentColor;">添加</div>
<div class="t" style="left:257.5px;top:255.40px;font-size:7px;line-height:20.00px;color:#8c8e95;-webkit-text-stroke:0.15px currentColor;">复制</div>
<div class="t" style="left:257.5px;top:270.40px;font-size:7px;line-height:20.00px;color:#8c8e95;-webkit-text-stroke:0.15px currentColor;">粘贴 (引用)</div>
<div class="t" style="left:257.5px;top:285.80px;font-size:7px;line-height:20.00px;color:#8c8e95;-webkit-text-stroke:0.15px currentColor;">粘贴 (副本)</div>
<div class="t" style="left:257.5px;top:303.20px;font-size:7px;line-height:20.00px;color:#8c8e95;-webkit-text-stroke:0.15px currentColor;">复制滤镜</div>
<div class="t" style="left:257.5px;top:317.60px;font-size:7px;line-height:20.00px;color:#8c8e95;-webkit-text-stroke:0.15px currentColor;">粘贴滤镜</div>
<div class="t" style="left:314.8px;top:255.95px;font-size:6.6px;line-height:18.86px;color:#8c8e95;">Ctrl+C</div>
<div class="t" style="left:314.8px;top:270.95px;font-size:6.6px;line-height:18.86px;color:#8c8e95;">Ctrl+V</div>
<svg class="a" style="left:340px;top:179.9px;" width="5" height="7" viewBox="0 0 5 7"><path d="M0.5 0.5L4.5 3.5L0.5 6.5Z" fill="#e6e7ea"/></svg>
<svg class="a" style="left:340px;top:194.9px;" width="5" height="7" viewBox="0 0 5 7"><path d="M0.5 0.5L4.5 3.5L0.5 6.5Z" fill="#e6e7ea"/></svg>
<svg class="a" style="left:340px;top:243.5px;" width="5" height="7" viewBox="0 0 5 7"><path d="M0.5 0.5L4.5 3.5L0.5 6.5Z" fill="#e6e7ea"/></svg>
<div class="a" style="left:243px;top:237.0px;width:104.5px;height:1.2px;background:#2e3038;"></div>
<div class="a" style="left:243px;top:255.20000000000002px;width:104.5px;height:1.2px;background:#2e3038;"></div>
<div class="a" style="left:243px;top:303.2px;width:104.5px;height:1.5px;background:#2c2e37;"></div>
</div></body></html>
